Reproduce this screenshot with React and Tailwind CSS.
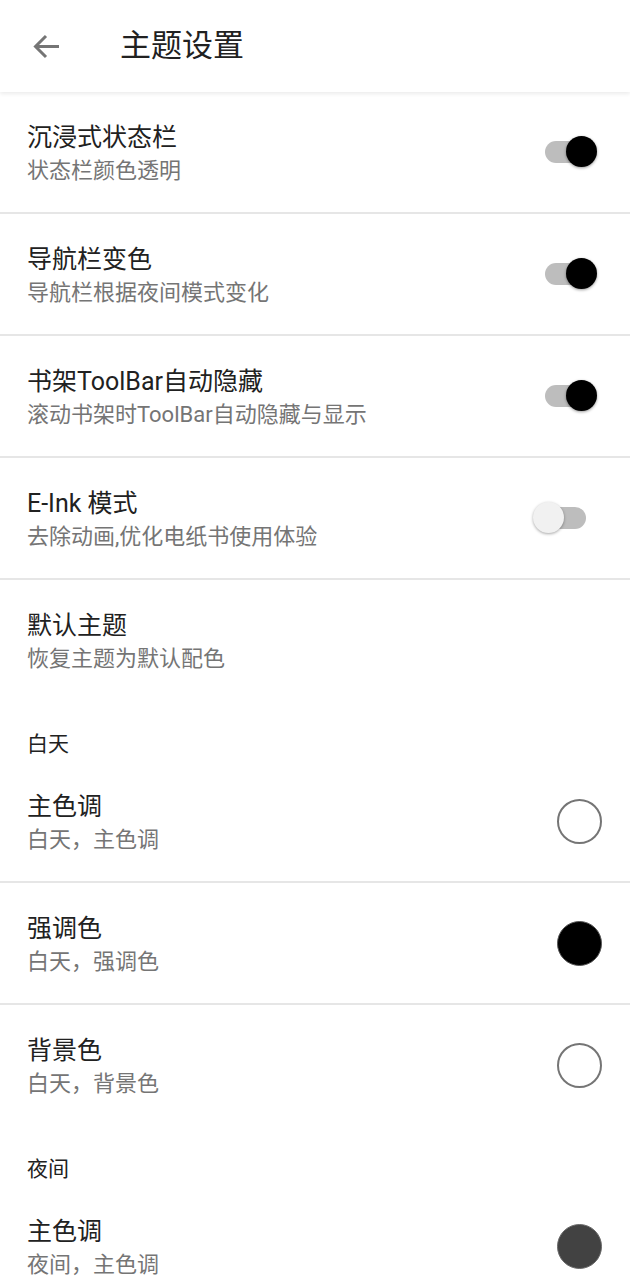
import React from "react";

const font = { fontFamily: '"Roboto", "Noto Sans CJK SC", sans-serif' };

function Switch({ on }) {
  return (
    <div className="relative w-[66px] h-[32px] shrink-0">
      <div className="absolute left-[13px] top-[5px] w-[41px] h-[22px] rounded-full bg-[#bdbdbd]" />
      {on ? (
        <div className="absolute left-[34px] top-0 w-[31px] h-[31px] rounded-full bg-black shadow-[0_1px_3px_rgba(0,0,0,0.4)]" />
      ) : (
        <div className="absolute left-[1px] top-0 w-[31px] h-[31px] rounded-full bg-[#f1f1f1] shadow-[0_1px_3px_rgba(0,0,0,0.35)]" />
      )}
    </div>
  );
}

function Circle({ kind }) {
  if (kind === "white")
    return <div className="w-[45px] h-[45px] rounded-full bg-white border-2 border-[#757575] shrink-0" />;
  if (kind === "black")
    return <div className="w-[45px] h-[45px] rounded-full bg-black border border-[#555] shrink-0" />;
  return <div className="w-[45px] h-[45px] rounded-full bg-[#424242] border border-[#6a6a6a] shrink-0" />;
}

function Row({ title, sub, right, divider = true, rightPad = "pr-[32px]" }) {
  return (
    <>
      <div className={`h-[120px] flex items-center pl-[27px] ${rightPad}`}>
        <div className="flex-1 flex flex-col pt-[3px]">
          <div className="text-[25px] leading-[33px] text-[#212121]">{title}</div>
          <div className="text-[22px] leading-[33px] text-[#757575]">{sub}</div>
        </div>
        {right}
      </div>
      {divider && <div className="h-[2px] bg-[#e6e6e6]" />}
    </>
  );
}

function Category({ label }) {
  return (
    <div className="h-[61px] pl-[27px] pt-[29px]">
      <div className="text-[21px] leading-[30px] text-[#212121]">{label}</div>
    </div>
  );
}

export default function App() {
  return (
    <div className="w-[630px] min-h-[1280px] bg-white overflow-hidden" style={font}>
      <div className="relative h-[92px] flex items-center bg-white shadow-[0_2px_4px_rgba(0,0,0,0.08)] z-10">
        <div className="w-[120px] flex pl-[33px]">
          <svg width="27" height="25" viewBox="0 0 27 25" fill="none">
            <path d="M26 12.5H3M13 2L2.5 12.5L13 23" stroke="#757575" strokeWidth="3" />
          </svg>
        </div>
        <div className="text-[31px] leading-[40px] text-[#212121]">主题设置</div>
      </div>
      <Row title="沉浸式状态栏" sub="状态栏颜色透明" right={<Switch on />} />
      <Row title="导航栏变色" sub="导航栏根据夜间模式变化" right={<Switch on />} />
      <Row title="书架ToolBar自动隐藏" sub="滚动书架时ToolBar自动隐藏与显示" right={<Switch on />} />
      <Row title="E-Ink 模式" sub="去除动画,优化电纸书使用体验" right={<Switch on={false} />} />
      <Row title="默认主题" sub="恢复主题为默认配色" divider={false} />
      <Category label="白天" />
      <Row title="主色调" sub="白天，主色调" right={<Circle kind="white" />} rightPad="pr-[28px]" />
      <Row title="强调色" sub="白天，强调色" right={<Circle kind="black" />} rightPad="pr-[28px]" />
      <Row title="背景色" sub="白天，背景色" right={<Circle kind="white" />} rightPad="pr-[28px]" divider={false} />
      <Category label="夜间" />
      <Row title="主色调" sub="夜间，主色调" right={<Circle kind="dark" />} rightPad="pr-[28px]" divider={false} />
    </div>
  );
}
